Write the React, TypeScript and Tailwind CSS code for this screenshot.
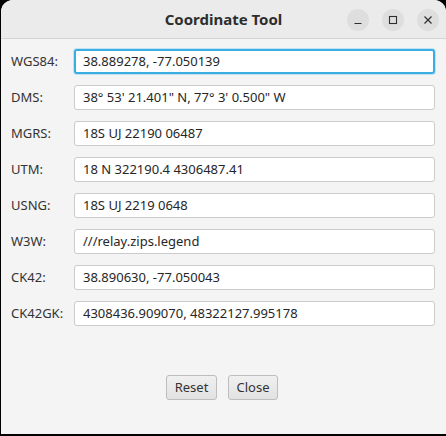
import React from 'react';

const rows: [string, string][] = [
  ['WGS84:', '38.889278, -77.050139'],
  ['DMS:', '38° 53\' 21.401" N, 77° 3\' 0.500" W'],
  ['MGRS:', '18S UJ 22190 06487'],
  ['UTM:', '18 N 322190.4 4306487.41'],
  ['USNG:', '18S UJ 2219 0648'],
  ['W3W:', '///relay.zips.legend'],
  ['CK42:', '38.890630, -77.050043'],
  ['CK42GK:', '4308436.909070, 48322127.995178'],
];

const font = { fontFamily: '"Noto Sans", "Open Sans", sans-serif' };

export default function App() {
  return (
    <div className="w-[446px] h-[436px] bg-black" style={font}>
      <div className="ml-[1px] w-[445px] h-[434px] bg-[#f4f4f4] rounded-t-[12px] overflow-hidden flex flex-col">
        {/* title bar */}
        <div className="h-[39px] shrink-0 bg-[#ebebeb] border-b border-[#d4d4d4] flex items-center relative">
          <div className="w-full text-center text-[15px] font-bold text-[#2e2e2e]">Coordinate Tool</div>
          <div className="absolute right-[7px] top-[9px] flex gap-[13px]">
            <span className="w-[22px] h-[22px] rounded-full bg-[#dedede] flex items-center justify-center">
              <svg width="10" height="10" viewBox="0 0 10 10"><path d="M1.5 8.5h7" stroke="#2e2e2e" strokeWidth="1.2" /></svg>
            </span>
            <span className="w-[22px] h-[22px] rounded-full bg-[#dedede] flex items-center justify-center">
              <svg width="10" height="10" viewBox="0 0 10 10"><rect x="1.5" y="1.5" width="7" height="7" fill="none" stroke="#2e2e2e" strokeWidth="1.1" /></svg>
            </span>
            <span className="w-[22px] h-[22px] rounded-full bg-[#dedede] flex items-center justify-center">
              <svg width="10" height="10" viewBox="0 0 10 10"><path d="M1.5 1.5l7 7M8.5 1.5l-7 7" stroke="#2e2e2e" strokeWidth="1.2" /></svg>
            </span>
          </div>
        </div>

        {/* fields */}
        <div className="flex flex-col gap-[11px] pt-[10px] pl-[10px] pr-[11px]">
          {rows.map(([label, value], i) => (
            <div key={label} className="flex items-center h-[25px]">
              <div className="w-[63px] text-[13px] text-[#333]">{label}</div>
              <div
                className={
                  i === 0
                    ? 'flex-1 h-[25px] bg-white rounded-[3px] border-2 border-[#3aaee2] shadow-[0_0_0_1px_#bfe3f3] flex items-center pl-[7px] text-[13px] text-[#262626]'
                    : 'flex-1 h-[25px] bg-white rounded-[3px] border border-[#cbcbcb] flex items-center pl-[8px] text-[13px] text-[#262626]'
                }
              >
                {value}
              </div>
            </div>
          ))}
        </div>

        {/* buttons */}
        <div className="flex justify-center gap-[11px] mt-auto mb-[34px] pr-[3px]">
          <button className="w-[51px] h-[25px] rounded-[3px] border border-[#bdbdbd] bg-gradient-to-b from-[#f0f0f0] to-[#e2e2e2] text-[13px] text-[#333]">Reset</button>
          <button className="w-[50px] h-[25px] rounded-[3px] border border-[#bdbdbd] bg-gradient-to-b from-[#f0f0f0] to-[#e2e2e2] text-[13px] text-[#333]">Close</button>
        </div>
      </div>
    </div>
  );
}
